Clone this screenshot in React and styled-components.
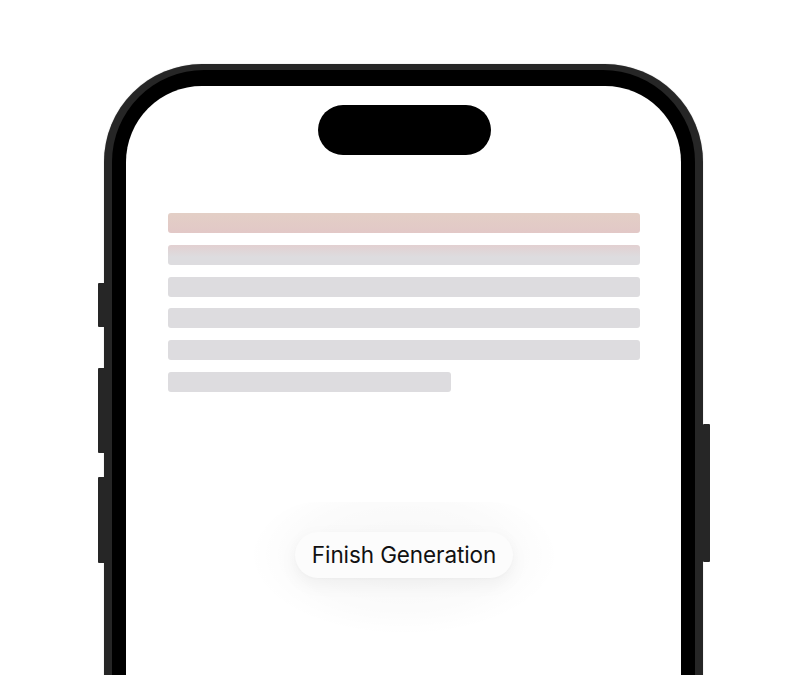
import React from 'react'
import styled, { createGlobalStyle } from 'styled-components'

const GlobalStyle = createGlobalStyle`
  html, body {
    margin: 0;
    padding: 0;
    background: #ffffff;
    overflow: hidden;
  }
  body {
    font-family: Inter, "Noto Sans", "Liberation Sans", sans-serif;
  }
`

const Stage = styled.div`
  width: 800px;
  height: 675px;
  display: flex;
  justify-content: center;
  padding-top: 64px;
  box-sizing: border-box;
  overflow: hidden;
`

const Phone = styled.div`
  position: relative;
  margin-left: 7px;
  width: 599px;
  height: 760px;
  flex-shrink: 0;
  box-sizing: border-box;
  padding: 6px 8px 0;
  border-radius: 98px;
  background: #262626;
  box-shadow: 0 0 1px rgba(0, 0, 0, 0.4);
`

const Bezel = styled.div`
  height: 100%;
  box-sizing: border-box;
  padding: 16px 14px 0;
  border-radius: 92px;
  background: #000;
`

const SideButton = styled.span`
  position: absolute;
  top: ${({ top }) => top}px;
  height: ${({ h }) => h}px;
  width: 7px;
  background: #262626;
  border-radius: 1px;
  ${({ right }) => (right ? 'right: -7px;' : 'left: -6px;')}
`

const Screen = styled.div`
  height: 100%;
  border-radius: 76px;
  background: #ffffff;
  display: flex;
  flex-direction: column;
  align-items: center;
  padding: 19px 41px 0 42px;
  box-sizing: border-box;
`

const Island = styled.div`
  width: 173px;
  height: 50px;
  border-radius: 25px;
  background: #000;
  flex-shrink: 0;
`

const Lines = styled.div`
  align-self: stretch;
  margin-top: 58px;
  display: flex;
  flex-direction: column;
  gap: 11.8px;
`

const Line = styled.div`
  height: 20px;
  width: ${({ w }) => w || '100%'};
  border-radius: 3px;
  background: ${({ tone }) =>
    tone === 'warm'
      ? 'linear-gradient(180deg, #e3cfc6 0%, #e2c8c7 100%)'
      : tone === 'fade'
      ? 'linear-gradient(180deg, #e2d0d1 0%, #dddcdf 60%, #dddcdf 100%)'
      : '#dddcdf'};
`

const Glow = styled.div`
  margin-top: 110px;
  padding: 30px 44px 56px;
  border-radius: 90px;
  background: radial-gradient(ellipse at 50% 40%, rgba(0, 0, 0, 0.03) 0%, rgba(0, 0, 0, 0.016) 50%, rgba(0, 0, 0, 0) 72%);
  display: flex;
  justify-content: center;
`

const FinishButton = styled.button`
  height: 46px;
  padding: 0 17px;
  border: none;
  border-radius: 23px;
  background: #fcfcfc;
  box-shadow: 0 6px 18px rgba(0, 0, 0, 0.05), 0 1px 3px rgba(0, 0, 0, 0.02);
  font-family: Inter, "Noto Sans", "Liberation Sans", sans-serif;
  font-size: 22.5px;
  font-weight: 400;
  color: #111;
  letter-spacing: -0.1px;
  cursor: pointer;
`

const lines = [
  { tone: 'warm' },
  { tone: 'fade' },
  {},
  {},
  {},
  { w: '60%' },
]

export default function App() {
  return (
    <>
      <GlobalStyle />
      <Stage>
        <Phone>
          <SideButton top={219} h={44} />
          <SideButton top={304} h={85} />
          <SideButton top={413} h={86} />
          <SideButton right top={360} h={138} />
          <Bezel>
            <Screen>
              <Island />
              <Lines>
                {lines.map((l, i) => (
                  <Line key={i} tone={l.tone} w={l.w} />
                ))}
              </Lines>
              <Glow>
                <FinishButton>Finish Generation</FinishButton>
              </Glow>
            </Screen>
          </Bezel>
        </Phone>
      </Stage>
    </>
  )
}
